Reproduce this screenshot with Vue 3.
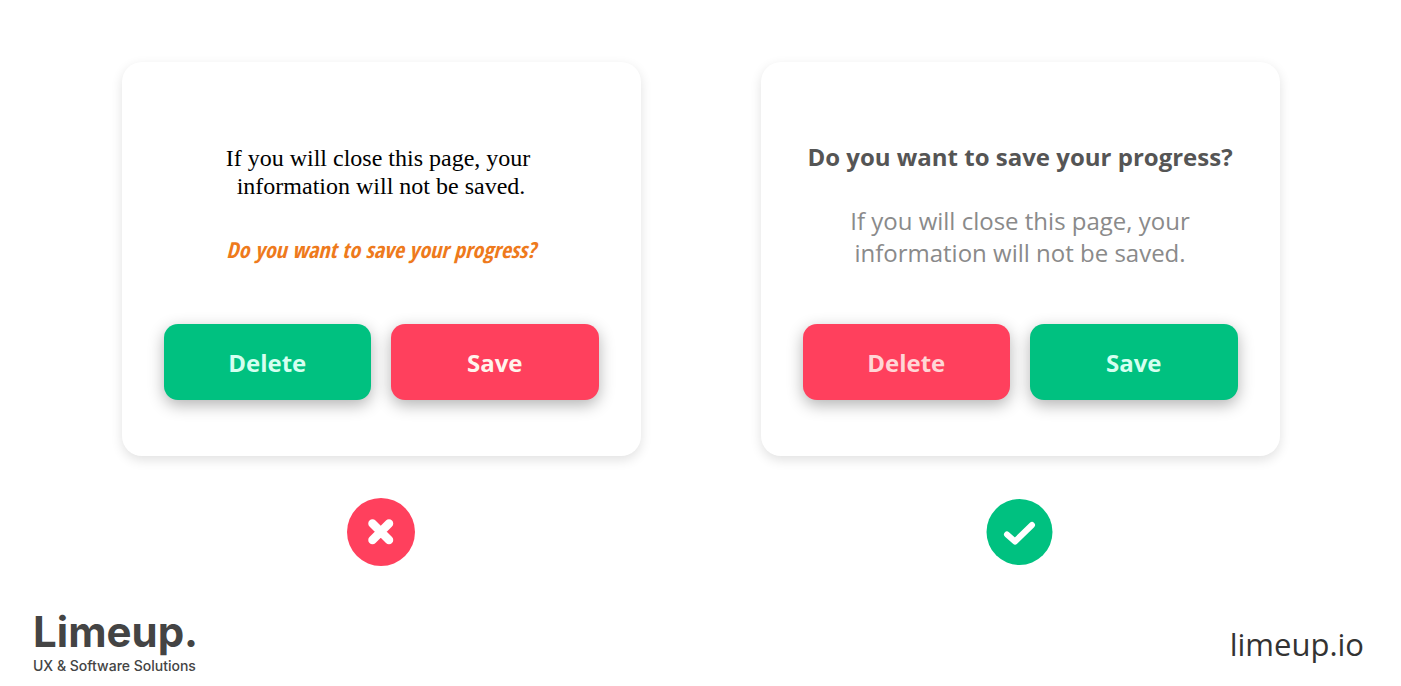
<script setup>
const cards = [
  { kind: 'bad', del: 'green', save: 'red' },
  { kind: 'good', del: 'red', save: 'green' },
]
</script>

<template>
  <div class="page">
    <main class="examples">
      <section v-for="c in cards" :key="c.kind" class="example">
        <div class="card" :class="c.kind">
          <h2 class="question">Do you want to save your progress?</h2>
          <p class="info">If you will close this page, your<template v-if="c.kind === 'bad'">&nbsp;</template><br />information will not be saved.</p>
          <div class="actions">
            <button type="button" :class="[c.del, 'delete']">Delete</button>
            <button type="button" :class="[c.save, 'save']">Save</button>
          </div>
        </div>
        <svg v-if="c.kind === 'bad'" class="mark" viewBox="0 0 68 68" role="img" aria-label="Wrong">
          <circle cx="34" cy="34" r="34" fill="#ff405d" />
          <path d="M25.5 25.5L42 42M42 25.5L25.5 42" stroke="#fff" stroke-width="8.5" stroke-linecap="round" />
        </svg>
        <svg v-else class="mark" viewBox="0 0 68 68" role="img" aria-label="Right">
          <circle cx="33.5" cy="34" r="33" fill="#00c180" />
          <path d="M21 36.5L29 43.5L46 27" fill="none" stroke="#fff" stroke-width="6" stroke-linecap="round" stroke-linejoin="round" />
        </svg>
      </section>
    </main>
    <footer>
      <div class="brand">
        <div class="name">Limeup.</div>
        <div class="tagline">UX &amp; Software Solutions</div>
      </div>
      <a href="#">limeup.io</a>
    </footer>
  </div>
</template>

<style scoped>
.page { min-height: 100vh; box-sizing: border-box; padding-top: 62px; display: flex; flex-direction: column; background: #fff; font-family: "Open Sans", sans-serif; }
.examples { display: flex; justify-content: center; gap: 120px; }
.example { width: 519px; display: flex; flex-direction: column; align-items: center; }
.card { width: 100%; box-sizing: border-box; padding: 79px 42px 56px; border-radius: 20px; background: #fff; box-shadow: 0 4px 12px rgba(0,0,0,.12); display: flex; flex-direction: column; text-align: center; }
h2, p { margin: 0; }
.question { font-size: 24px; line-height: 32px; font-weight: 700; color: #555; }
.info { font-size: 24px; line-height: 32px; color: #8a8a8a; margin-top: 32px; }
.bad .info { order: -1; margin: 3px 0 33px; font-family: "Liberation Serif", serif; line-height: 28px; color: #000; }
.bad .question { font-family: "Open Sans Condensed", "Open Sans", sans-serif; font-size: 22px; font-style: italic; color: #ee7a1c; margin-bottom: 4px; }
.actions { display: flex; gap: 20px; margin-top: 55px; }
button { flex: 1; height: 76px; padding: 0; border: 0; border-radius: 14px; font: 700 24px "Open Sans", sans-serif; box-shadow: 0 5px 16px rgba(0,0,0,.3); }
.green { background: #00c180; color: #d5fff0; }
.red { background: #ff405d; color: #fff4ec; }
.red.delete { color: #ffd6d6; }
.mark { width: 68px; height: 68px; margin-top: 42px; }
footer { display: flex; justify-content: space-between; align-items: center; margin-top: 40px; padding: 0 37px 0 33px; color: #444; }
.name { font: 700 42px/52px "Inter", sans-serif; }
.tagline { font: 500 14px/16px "Inter", sans-serif; }
a { font-size: 31px; line-height: 48px; margin-top: 7px; color: #333; text-decoration: none; }
</style>
